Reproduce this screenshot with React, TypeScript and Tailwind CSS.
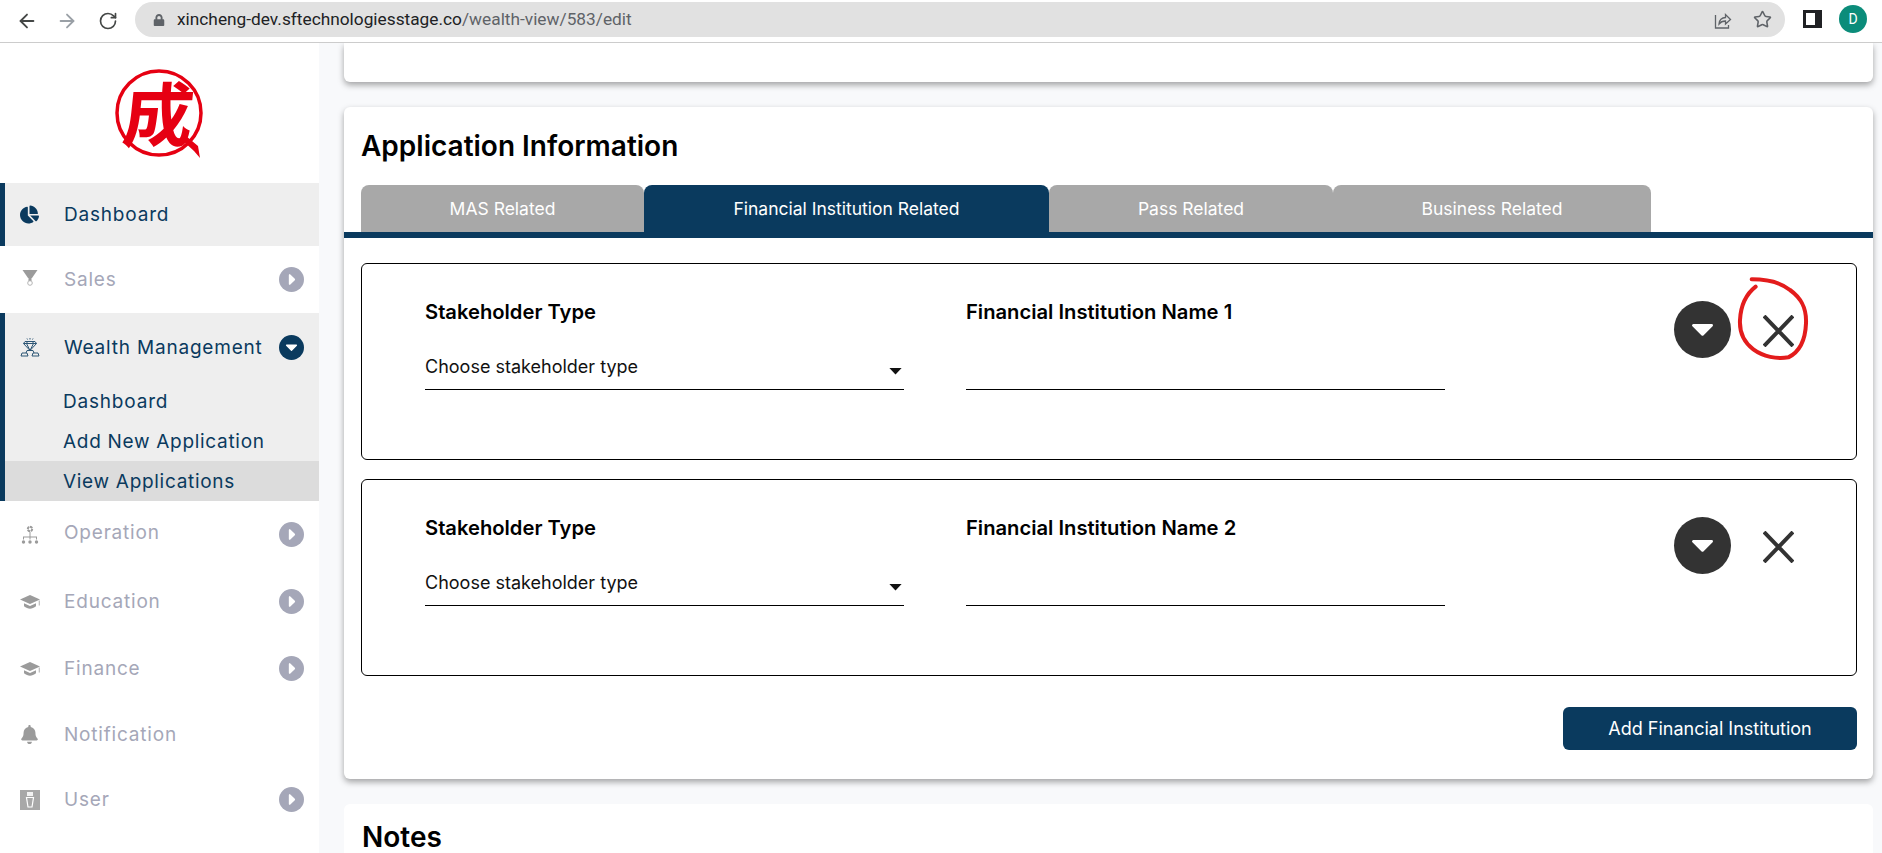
import React from 'react';
import { ArrowLeft, ArrowRight, RotateCw, Star } from 'lucide-react';
import { FaBell, FaChartPie, FaLock } from 'react-icons/fa';

const navy = 'text-[#0a3a5e]';

// round badge with a small white caret, used in the sidebar and on the cards
function CaretBadge({ open, big, className }: { open?: boolean; big?: boolean; className: string }) {
  return (
    <span className={`flex shrink-0 items-center justify-center rounded-full ${className}`}>
      <svg viewBox={big ? '-5 -5 34 34' : '-2 -2 28 28'} className="h-full w-full">
        {open ? (
          <path d="M6.500 9.500h11l-5.500 5.500z" fill="#fff" stroke="#fff" strokeWidth="1.500" strokeLinejoin="round" />
        ) : (
          <path d="M10 7v10l5-5z" fill="#fff" stroke="#fff" strokeWidth="2" strokeLinejoin="round" />
        )}
      </svg>
    </span>
  );
}

function FunnelIcon() {
  return (
    <svg viewBox="0 0 16 16" className="-mt-1 ml-0.5 h-4 w-4" fill="#9b9b9b">
      <path d="M0.500 0h15l-5.500 8H6z" />
      <path d="M6.500 8h3v3h-3z" />
      <circle cx="8" cy="13" r="2.300" fill="none" stroke="#b5b5b5" strokeWidth="1" />
    </svg>
  );
}

function DiamondIcon() {
  return (
    <svg viewBox="0 0 20 20" className="h-5 w-5" fill="none" stroke="#2d5675" strokeWidth="1">
      <path d="M3.500 6.500l1.500-2h10l1.500 2-6.500 7zM3.500 6.500h13M7.500 4.500l-1 2 3.500 7 3.500-7-1-2" />
      <path d="M10 1v1.500M7 1.500l.5 1M13 1.500l-.5 1" />
      <path d="M1 19l1-3h5l1 3zM12 19l1-3h5l1 3zM6 16l1-2.500h6l1 2.500" />
    </svg>
  );
}

function OrgIcon() {
  return (
    <svg viewBox="0 0 20 20" className="h-5 w-5" fill="#9b9b9b">
      <circle cx="10" cy="4" r="2.200" fill="none" stroke="#9b9b9b" strokeWidth="2" strokeDasharray="2.500 0.600" />
      <path d="M9.500 7h1v4.500h6.500v3h-1v-2h-5.500v2h-1v-2H4v2H3v-3h6.500z" />
      <circle cx="3.500" cy="17" r="1.700" />
      <circle cx="10" cy="17" r="1.700" />
      <circle cx="16.500" cy="17" r="1.700" />
    </svg>
  );
}

function CapIcon() {
  return (
    <svg viewBox="0 0 20 15" className="h-[15px] w-5" fill="#9b9b9b">
      <path d="M0 5.500L10 1l10 4.500L10 10z" />
      <path d="M4 9.300l6 2.700 6-2.700v3C14 14 12 14.700 10 14.700S6 14 4 12.300z" />
      <path d="M18.800 6.500h.8v5h-.8z" />
    </svg>
  );
}

function TieBoxIcon() {
  return (
    <svg viewBox="0 0 20 20" className="h-5 w-5">
      <rect width="20" height="20" fill="#a8a8a8" />
      <path d="M7 2h6v4H7z" fill="#fff" opacity="0.85" />
      <path d="M6.500 7.500h7L12 17H8z" fill="none" stroke="#fff" strokeWidth="1.200" />
    </svg>
  );
}

function NavRow({
  icon,
  label,
  badge,
  height,
  lift,
}: {
  icon: React.ReactNode;
  label: string;
  badge?: boolean;
  height: string;
  lift?: boolean;
}) {
  return (
    <div className={`flex items-center pl-5 pr-[15px] ${height}`}>
      <span className="flex w-11 items-center text-[#9b9b9b]">{icon}</span>
      <span className={`text-[19px] tracking-[0.8px] text-[#a5a7b8] ${lift ? '-translate-y-px' : 'translate-y-px'}`}>
        {label}
      </span>
      {badge && <CaretBadge className="ml-auto h-[25px] w-[25px] bg-[#a5a7b8]" />}
    </div>
  );
}

function Sidebar() {
  return (
    <aside className="flex w-[319px] shrink-0 flex-col bg-white">
      <div className="h-[140px] pl-[114px] pt-[25px]">
        {/* logo */}
        <div className="relative h-[92px] w-[90px]">
          <svg viewBox="0 0 90 92" className="h-[92px] w-[90px]">
            <circle cx="45" cy="45" r="42" fill="none" stroke="#e60012" strokeWidth="3.500" />
            <path d="M68 72l4-4 12 10 2 12-6-7z" fill="#e60012" />
          </svg>
          <div className="absolute inset-0 flex items-center justify-center pb-[6px]">
            <span className="-skew-x-6 font-['Noto_Sans_CJK_SC',sans-serif] text-[70px] font-bold leading-none text-[#e60012]">
              成
            </span>
          </div>
        </div>
      </div>

      <div className={`flex h-[63px] items-center border-l-[5px] border-[#0a3a5e] bg-[#eeeeee] pl-[15px] ${navy}`}>
        <span className="flex w-11 items-center">
          <FaChartPie size={19} />
        </span>
        <span className="translate-y-px text-[19px] tracking-[0.8px]">Dashboard</span>
      </div>

      <NavRow icon={<FunnelIcon />} label="Sales" badge height="h-[67px]" />

      <div className={`border-l-[5px] border-[#0a3a5e] bg-[#eeeeee] ${navy}`}>
        <div className="flex h-[68px] items-center pl-[15px] pr-[15px]">
          <span className="flex w-11 items-center">
            <DiamondIcon />
          </span>
          <span className="translate-y-px text-[19px] tracking-[0.8px]">Wealth Management</span>
          <CaretBadge open className="ml-auto h-[25px] w-[25px] bg-[#0a3a5e]" />
        </div>
        <div className="flex h-10 items-center pl-[58px] pt-[2px] text-[19px] tracking-[0.8px]">Dashboard</div>
        <div className="flex h-10 items-center pl-[58px] pt-[2px] text-[19px] tracking-[0.7px]">Add New Application</div>
        <div className="flex h-10 items-center bg-[#dcdcdc] pl-[58px] pt-[2px] text-[19px] tracking-[0.7px]">
          View Applications
        </div>
      </div>

      <NavRow icon={<OrgIcon />} label="Operation" badge lift height="h-[67px]" />
      <NavRow icon={<CapIcon />} label="Education" badge height="h-[67px]" />
      <NavRow icon={<CapIcon />} label="Finance" badge height="h-[67px]" />
      <NavRow icon={<FaBell size={19} />} label="Notification" height="h-[65px]" />
      <NavRow icon={<TieBoxIcon />} label="User" badge height="h-[65px]" />
    </aside>
  );
}

function InstitutionBox({ index, circled }: { index: number; circled?: boolean }) {
  return (
    <div className="relative flex h-[197px] rounded-md border border-black pl-[63px] pr-[62px] pt-[38px]">
      <div className="w-[479px]">
        <div className="flex h-[20px] items-center text-[20.200px] font-semibold text-black">Stakeholder Type</div>
        <div className="mt-[35px] flex h-[33px] items-start justify-between border-b border-black pr-[2px]">
          <span className="text-[18px] leading-[20px] text-[#111]">Choose stakeholder type</span>
          <svg viewBox="0 0 14 8" className="mt-[11px] h-[7px] w-[13px]">
            <path d="M0 0h14l-7 7.500z" fill="#111" />
          </svg>
        </div>
      </div>
      <div className="ml-[62px] w-[479px]">
        <div className="flex h-[20px] items-center text-[20.200px] font-semibold text-black">
          Financial Institution Name {index}
        </div>
        <div className="mt-[35px] h-[33px] border-b border-black" />
      </div>
      <div className="-mt-px ml-auto flex items-start gap-[32px]">
        <CaretBadge open big className="h-[57px] w-[57px] bg-[#333333]" />
        <svg viewBox="0 0 31 32" className="mt-[14px] h-8 w-[31px]" stroke="#333333" strokeWidth="4">
          <path d="M1 1l29 30M30 1L1 31" />
        </svg>
      </div>
      {circled && (
        <svg viewBox="0 0 786 480" className="absolute left-[1258px] top-[-4px] h-[160px] w-[262px]" fill="none">
          <path
            d="M395 58C440 58 480 65 510 90C545 115 560 145 558 190C556 240 540 275 505 292C470 298 430 290 400 268C370 245 358 215 360 180C362 140 375 105 407 80"
            stroke="#e31c1c"
            strokeWidth="12"
            strokeLinecap="round"
          />
        </svg>
      )}
    </div>
  );
}

export default function App() {
  const tabs = [
    { label: 'MAS Related', w: 'w-[283px]', active: false },
    { label: 'Financial Institution Related', w: 'w-[405px]', active: true },
    { label: 'Pass Related', w: 'w-[284px]', active: false },
    { label: 'Business Related', w: 'w-[318px]', active: false },
  ];

  return (
    <div className="flex h-[853px] flex-col overflow-hidden bg-white font-['Inter',sans-serif]">
      {/* browser toolbar */}
      <div className="flex h-[43px] shrink-0 items-start border-b border-[#cccccc] bg-white">
        <div className="flex h-[42px] items-center pl-4 text-[#444746]">
          <ArrowLeft size={22} strokeWidth={2} />
          <ArrowRight size={22} strokeWidth={2} className="ml-[18px] text-[#9aa0a6]" />
          <RotateCw size={20} strokeWidth={2} className="ml-5" />
        </div>
        <div className="ml-[17px] mt-[2px] flex h-[35px] w-[1650px] items-center rounded-full bg-[#e1e1e1] pl-[18px] pr-[13px]">
          <FaLock size={12} className="text-[#5f6368]" />
          <span className="ml-3 font-['Roboto',sans-serif] text-[17.300px] text-[#202124]">
            xincheng-dev.sftechnologiesstage.co<span className="text-[#5f6368]">/wealth-view/583/edit</span>
          </span>
          <svg viewBox="0 0 20 20" className="ml-auto h-5 w-5" fill="none" stroke="#5f6368" strokeWidth="1.300">
            <path d="M3.500 5v13h13v-3" />
            <path d="M7 14c0-4 3-6.500 6.500-6.500V4.500l5 5-5 4.500v-3c-3 0-5 1-6.500 3z" />
          </svg>
          <Star size={19} strokeWidth={2} className="ml-[21px] text-[#5f6368]" />
        </div>
        <div className="ml-[18px] mt-[10px] h-[18px] w-[19px] border-[3px] border-r-[7px] border-[#202124] bg-white" />
        <div className="ml-[17px] mt-[5px] flex h-7 w-7 items-center justify-center rounded-full bg-[#0b8c7a] font-['Roboto',sans-serif] text-[14px] text-white">
          D
        </div>
      </div>

      <div className="flex min-h-0 flex-1">
        <Sidebar />
        <main className="flex flex-1 flex-col gap-[25px] overflow-hidden bg-[#f8f9fb] pl-[25px] pr-[9px]">
          <div className="h-[39px] shrink-0 rounded-b-md bg-white shadow-[0_3px_6px_rgba(0,0,0,0.35)]" />

          <section className="h-[672px] shrink-0 rounded-md bg-white shadow-[0_3px_6px_rgba(0,0,0,0.35)]">
            <h1 className="flex h-[78px] items-center px-[17px] text-[28px] font-semibold text-black">
              Application Information
            </h1>
            <div className="flex border-b-[6px] border-[#0a3a5e] pl-[17px]">
              {tabs.map((t) => (
                <div
                  key={t.label}
                  className={`flex h-[47px] items-center justify-center rounded-t-lg pt-[2px] text-[17.500px] text-white ${t.w} ${
                    t.active ? 'bg-[#0a3a5e]' : 'bg-[#a8a8a8]'
                  }`}
                >
                  {t.label}
                </div>
              ))}
            </div>
            <div className="flex flex-col gap-[19px] pl-[17px] pr-[16px] pt-[25px]">
              <InstitutionBox index={1} circled />
              <InstitutionBox index={2} />
            </div>
            <div className="mt-[31px] flex justify-end pr-[16px]">
              <button className="h-[43px] w-[294px] rounded-md bg-[#0a3a5e] text-[18px] text-white">
                Add Financial Institution
              </button>
            </div>
          </section>

          <section className="flex-1 rounded-t-md bg-white px-[18px] pt-[12px]">
            <h2 className="text-[28px] font-semibold text-black">Notes</h2>
          </section>
        </main>
      </div>
    </div>
  );
}
